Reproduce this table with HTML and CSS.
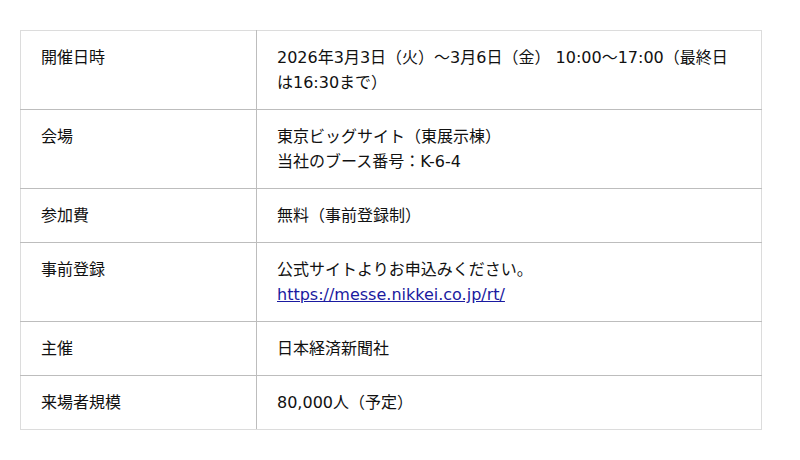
FILE: index.html
```html
<!DOCTYPE html>
<html lang="ja">
<head>
<meta charset="utf-8">
<link rel="stylesheet" href="styles.css">
</head>
<body>
<div class="page">
<table class="info">
<tr><th>開催日時</th><td>2026年3月3日（火）～3月6日（金） 10:00～17:00（最終日は16:30まで）</td></tr>
<tr><th>会場</th><td>東京ビッグサイト（東展示棟）<br>当社のブース番号：K-6-4</td></tr>
<tr><th>参加費</th><td>無料（事前登録制）</td></tr>
<tr><th>事前登録</th><td>公式サイトよりお申込みください。<br><a href="#">https://messe.nikkei.co.jp/rt/</a></td></tr>
<tr><th>主催</th><td>日本経済新聞社</td></tr>
<tr><th>来場者規模</th><td>80,000人（予定）</td></tr>
</table>
</div>
</body>
</html>
```
FILE: styles.css
```css
html, body { margin: 0; padding: 0; background: #fff; }
body {
  font-family: "DejaVu Sans", "Noto Sans CJK JP", sans-serif;
  font-size: 16px;
  line-height: 25px;
  color: #111;
}
.page { padding: 30px 38px 0 20px; }
.info {
  width: 742px;
  border-collapse: collapse;
}
.info th, .info td {
  text-align: left;
  vertical-align: top;
  font-weight: normal;
  padding: 14px 20px 14px 20px;
  border: 1px solid #bdbdbd;
}
.info th { width: 195px; }
.info tr:first-child th, .info tr:first-child td { border-top-color: #dcdcdc; }
.info tr:last-child th, .info tr:last-child td { border-bottom-color: #dcdcdc; }
.info th { border-left-color: #dcdcdc; }
.info td { border-right-color: #dcdcdc; }
.info a { color: #1a1aa0; }
```
